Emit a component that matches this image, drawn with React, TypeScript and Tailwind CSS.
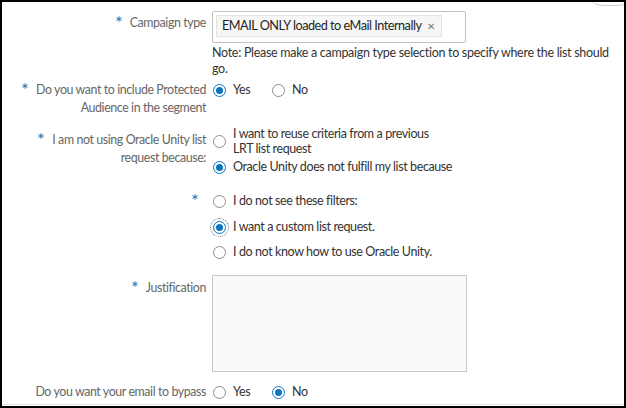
import { ReactNode } from 'react'

function Star() {
  return (
    <svg
      width="6"
      height="6"
      viewBox="0 0 8 8"
      className="mr-[8px] inline-block align-top mt-[2px]"
    >
      <g stroke="#2a73ad" strokeWidth="1.3" strokeLinecap="round">
        <line x1="4" y1="0.8" x2="4" y2="7.2" />
        <line x1="1" y1="2.4" x2="7" y2="5.6" />
        <line x1="7" y1="2.4" x2="1" y2="5.6" />
      </g>
    </svg>
  )
}

function Radio({ checked, focused }: { checked?: boolean; focused?: boolean }) {
  return (
    <span
      className={`flex h-[13px] w-[13px] shrink-0 items-center justify-center rounded-full border bg-white ${
        checked ? 'border-[#0b76c0]' : 'border-[#8e8e8e]'
      } ${focused ? 'outline-1 outline-dotted outline-offset-[2px] outline-[#7a7a7a]' : ''}`}
    >
      {checked && <span className="h-[7px] w-[7px] rounded-full bg-[#0b76c0]" />}
    </span>
  )
}

function Option({
  label,
  checked,
  focused,
  className = '',
}: {
  label: ReactNode
  checked?: boolean
  focused?: boolean
  className?: string
}) {
  return (
    <div className={`flex items-center ${className}`}>
      <span className="ml-[1px]">
        <Radio checked={checked} focused={focused} />
      </span>
      <span className="ml-[7px] text-[12.5px] tracking-[-0.4px] text-[#333]">{label}</span>
    </div>
  )
}

function Label({ children, required, className = '' }: { children?: ReactNode; required?: boolean; className?: string }) {
  return (
    <div
      className={`w-[204px] shrink-0 text-right text-[12.4px] leading-[18px] tracking-[-0.4px] text-[#666] ${className}`}
    >
      {required && <Star />}
      {children}
    </div>
  )
}

export default function App() {
  return (
    <div className="relative h-[408px] w-[626px] overflow-hidden border-2 border-black bg-white font-['Lato',sans-serif] text-[13px]">
      <div className="absolute left-[585px] top-[-26px] h-[30px] w-[46px] rounded-full border border-[#cfcfcf]" />
      <div className="h-[403px] overflow-hidden border-b border-[#e2e2e2] pt-[9px]">
        {/* Campaign type */}
        <div className="flex">
          <Label required className="pt-[3px]">
            Campaign type
          </Label>
          <div className="ml-[6px]">
            <div className="h-[32px] w-[254px] rounded-[2px] border border-[#c2c2c2] p-[3px]">
              <span className="inline-flex h-[22px] items-center whitespace-nowrap border border-[#e3e3e3] bg-[#f6f6f6] pl-[5px] pr-[6px] text-[12.7px] tracking-[-0.5px] text-[#1f1f1f]">
                EMAIL ONLY loaded to eMail Internally
                <span className="ml-[6px] text-[10px] text-[#777]">✕</span>
              </span>
            </div>
            <p className="mt-[2px] w-[402px] text-[12.5px] leading-[16px] tracking-[-0.3px] text-[#333]">
              Note: Please make a campaign type selection to specify where the list should go.
            </p>
          </div>
        </div>

        {/* Protected audience */}
        <div className="mt-[4px] flex">
          <Label required>
            Do you want to include Protected
            <br />
            Audience in the segment
          </Label>
          <div className="ml-[6px] flex h-[18px] leading-[18px]">
            <Option label="Yes" checked className="w-[59px]" />
            <Option label="No" />
          </div>
        </div>

        {/* Oracle Unity reason */}
        <div className="mt-[9px] flex">
          <Label required className="pt-[5px]">
            I am not using Oracle Unity list
            <br />
            request because:
          </Label>
          <div className="ml-[6px]">
            <Option
              label={
                <span className="block leading-[15px]">
                  I want to reuse criteria from a previous
                  <br />
                  LRT list request
                </span>
              }
            />
            <Option label="Oracle Unity does not fulfill my list because" checked className="mt-[2px] leading-[18px]" />
          </div>
        </div>

        {/* Sub reasons */}
        <div className="mt-[16px] flex">
          <Label required />
          <div className="ml-[6px] leading-[18px]">
            <Option label="I do not see these filters:" />
            <Option label="I want a custom list request." checked focused className="mt-[8px]" />
            <Option label="I do not know how to use Oracle Unity." className="mt-[7px]" />
          </div>
        </div>

        {/* Justification */}
        <div className="mt-[14px] flex">
          <Label required className="pt-[4px]">
            Justification
          </Label>
          <div className="ml-[6px] h-[97px] w-[255px] border border-[#c8c8c8] bg-[#fafafa]" />
        </div>

        {/* Bypass */}
        <div className="mt-[11px] flex">
          <Label>Do you want your email to bypass</Label>
          <div className="ml-[6px] flex h-[18px] leading-[18px]">
            <Option label="Yes" className="w-[59px]" />
            <Option label="No" checked />
          </div>
        </div>
      </div>
    </div>
  )
}
